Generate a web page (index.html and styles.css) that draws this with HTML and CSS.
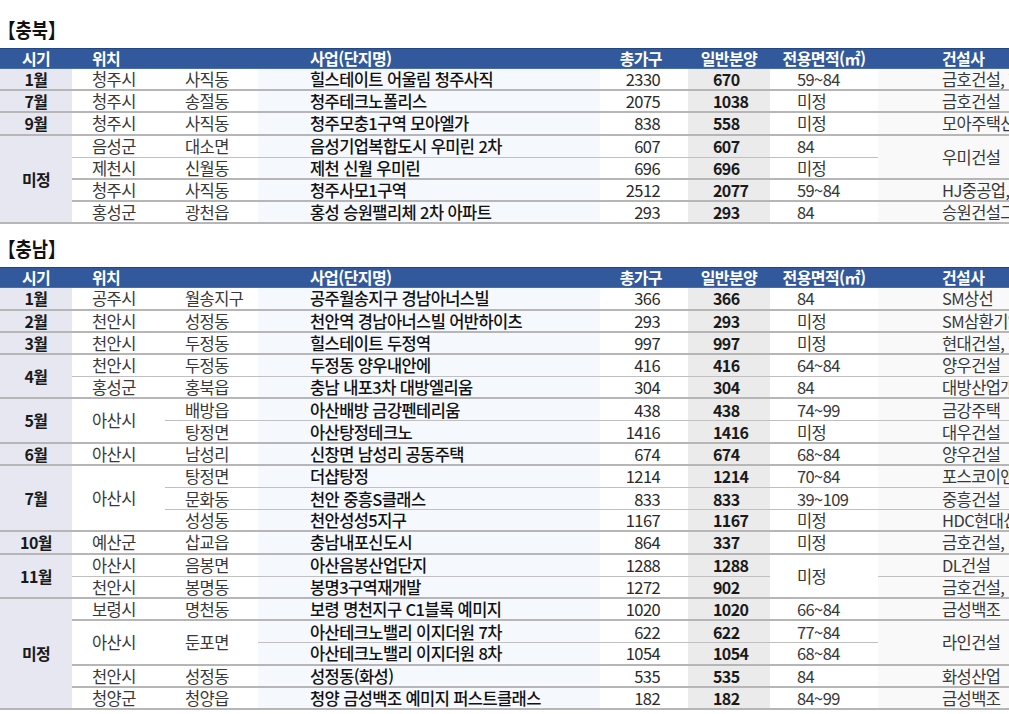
FILE: index.html
```html
<!DOCTYPE html>
<html lang="ko">
<head>
<meta charset="utf-8">
<title>충북 충남 분양 일정</title>
<link rel="stylesheet" href="styles.css">
</head>
<body>
<div class="title"><span>【충북】</span></div>
<table class="sched">
  <colgroup>
    <col class="c1"><col class="c2"><col class="c3"><col class="c4"><col class="c5"><col class="c6"><col class="c7"><col class="c8">
  </colgroup>
  <thead>
    <tr><th class="t">시기</th><th class="loc" colspan="2">위치</th><th class="pj">사업(단지명)</th><th class="tot">총가구</th><th class="hc">일반분양</th><th class="hc">전용면적(㎡)</th><th class="bd">건설사</th></tr>
  </thead>
  <tbody>
    <tr><td class="t">1월</td><td class="ci">청주시</td><td class="dg">사직동</td><td class="pj">힐스테이트 어울림 청주사직</td><td class="tot">2330</td><td class="gen">670</td><td class="ar">59~84</td><td class="bd">금호건설, 현대건설</td></tr>
    <tr><td class="t">7월</td><td class="ci">청주시</td><td class="dg">송절동</td><td class="pj">청주테크노폴리스</td><td class="tot">2075</td><td class="gen">1038</td><td class="ar">미정</td><td class="bd">금호건설</td></tr>
    <tr><td class="t">9월</td><td class="ci">청주시</td><td class="dg">사직동</td><td class="pj">청주모충1구역 모아엘가</td><td class="tot">838</td><td class="gen">558</td><td class="ar">미정</td><td class="bd">모아주택산업</td></tr>
    <tr><td class="t" rowspan="4">미정</td><td class="ci s">음성군</td><td class="dg s">대소면</td><td class="pj s">음성기업복합도시 우미린 2차</td><td class="tot s">607</td><td class="gen s">607</td><td class="ar s">84</td><td class="bd" rowspan="2">우미건설</td></tr>
    <tr><td class="ci">제천시</td><td class="dg">신월동</td><td class="pj">제천 신월 우미린</td><td class="tot">696</td><td class="gen">696</td><td class="ar">미정</td></tr>
    <tr><td class="ci">청주시</td><td class="dg">사직동</td><td class="pj">청주사모1구역</td><td class="tot">2512</td><td class="gen">2077</td><td class="ar">59~84</td><td class="bd">HJ중공업, 대우건설</td></tr>
    <tr><td class="ci">홍성군</td><td class="dg">광천읍</td><td class="pj">홍성 승원팰리체 2차 아파트</td><td class="tot">293</td><td class="gen">293</td><td class="ar">84</td><td class="bd">승원건설그룹</td></tr>
  </tbody>
</table>

<div class="title title2"><span>【충남】</span></div>
<table class="sched">
  <colgroup>
    <col class="c1"><col class="c2"><col class="c3"><col class="c4"><col class="c5"><col class="c6"><col class="c7"><col class="c8">
  </colgroup>
  <thead>
    <tr><th class="t">시기</th><th class="loc" colspan="2">위치</th><th class="pj">사업(단지명)</th><th class="tot">총가구</th><th class="hc">일반분양</th><th class="hc">전용면적(㎡)</th><th class="bd">건설사</th></tr>
  </thead>
  <tbody>
    <tr><td class="t">1월</td><td class="ci">공주시</td><td class="dg">월송지구</td><td class="pj">공주월송지구 경남아너스빌</td><td class="tot">366</td><td class="gen">366</td><td class="ar">84</td><td class="bd">SM상선</td></tr>
    <tr><td class="t">2월</td><td class="ci">천안시</td><td class="dg">성정동</td><td class="pj">천안역 경남아너스빌 어반하이츠</td><td class="tot">293</td><td class="gen">293</td><td class="ar">미정</td><td class="bd">SM삼환기업</td></tr>
    <tr><td class="t">3월</td><td class="ci">천안시</td><td class="dg">두정동</td><td class="pj">힐스테이트 두정역</td><td class="tot">997</td><td class="gen">997</td><td class="ar">미정</td><td class="bd">현대건설, 현대엔지니어링</td></tr>
    <tr><td class="t" rowspan="2">4월</td><td class="ci s">천안시</td><td class="dg s">두정동</td><td class="pj s">두정동 양우내안에</td><td class="tot s">416</td><td class="gen s">416</td><td class="ar s">64~84</td><td class="bd s">양우건설</td></tr>
    <tr><td class="ci">홍성군</td><td class="dg">홍북읍</td><td class="pj">충남 내포3차 대방엘리움</td><td class="tot">304</td><td class="gen">304</td><td class="ar">84</td><td class="bd">대방산업개발</td></tr>
    <tr><td class="t" rowspan="2">5월</td><td class="ci" rowspan="2">아산시</td><td class="dg s">배방읍</td><td class="pj s">아산배방 금강펜테리움</td><td class="tot s">438</td><td class="gen s">438</td><td class="ar s">74~99</td><td class="bd s">금강주택</td></tr>
    <tr><td class="dg">탕정면</td><td class="pj">아산탕정테크노</td><td class="tot">1416</td><td class="gen">1416</td><td class="ar">미정</td><td class="bd">대우건설</td></tr>
    <tr><td class="t">6월</td><td class="ci">아산시</td><td class="dg">남성리</td><td class="pj">신창면 남성리 공동주택</td><td class="tot">674</td><td class="gen">674</td><td class="ar">68~84</td><td class="bd">양우건설</td></tr>
    <tr><td class="t" rowspan="3">7월</td><td class="ci" rowspan="3">아산시</td><td class="dg s">탕정면</td><td class="pj s">더샵탕정</td><td class="tot s">1214</td><td class="gen s">1214</td><td class="ar s">70~84</td><td class="bd s">포스코이앤씨</td></tr>
    <tr><td class="dg s">문화동</td><td class="pj s">천안 중흥S클래스</td><td class="tot s">833</td><td class="gen s">833</td><td class="ar s">39~109</td><td class="bd s">중흥건설</td></tr>
    <tr><td class="dg">성성동</td><td class="pj">천안성성5지구</td><td class="tot">1167</td><td class="gen">1167</td><td class="ar">미정</td><td class="bd">HDC현대산업개발</td></tr>
    <tr><td class="t">10월</td><td class="ci">예산군</td><td class="dg">삽교읍</td><td class="pj">충남내포신도시</td><td class="tot">864</td><td class="gen">337</td><td class="ar">미정</td><td class="bd">금호건설, 대우건설</td></tr>
    <tr><td class="t" rowspan="2">11월</td><td class="ci s">아산시</td><td class="dg s">음봉면</td><td class="pj s">아산음봉산업단지</td><td class="tot s">1288</td><td class="gen s">1288</td><td class="ar" rowspan="2">미정</td><td class="bd s">DL건설</td></tr>
    <tr><td class="ci">천안시</td><td class="dg">봉명동</td><td class="pj">봉명3구역재개발</td><td class="tot">1272</td><td class="gen">902</td><td class="bd">금호건설, 대우건설</td></tr>
    <tr><td class="t" rowspan="5">미정</td><td class="ci">보령시</td><td class="dg">명천동</td><td class="pj">보령 명천지구 C1블록 예미지</td><td class="tot">1020</td><td class="gen">1020</td><td class="ar">66~84</td><td class="bd">금성백조</td></tr>
    <tr><td class="ci" rowspan="2">아산시</td><td class="dg" rowspan="2">둔포면</td><td class="pj s">아산테크노밸리 이지더원 7차</td><td class="tot s">622</td><td class="gen s">622</td><td class="ar s">77~84</td><td class="bd" rowspan="2">라인건설</td></tr>
    <tr><td class="pj">아산테크노밸리 이지더원 8차</td><td class="tot">1054</td><td class="gen">1054</td><td class="ar">68~84</td></tr>
    <tr><td class="ci">천안시</td><td class="dg">성정동</td><td class="pj">성정동(화성)</td><td class="tot">535</td><td class="gen">535</td><td class="ar">84</td><td class="bd">화성산업</td></tr>
    <tr><td class="ci">청양군</td><td class="dg">청양읍</td><td class="pj">청양 금성백조 예미지 퍼스트클래스</td><td class="tot">182</td><td class="gen">182</td><td class="ar">84~99</td><td class="bd">금성백조</td></tr>
  </tbody>
</table>
</body>
</html>
```

FILE: styles.css
```css
html, body {
  margin: 0;
  padding: 0;
  background: #ffffff;
  overflow: hidden;
}

body {
  width: 1009px;
  height: 714px;
  font-family: "Noto Sans CJK KR", "Noto Sans", sans-serif;
  color: #2b2b2b;
}

.title {
  height: 48px;
  box-sizing: border-box;
  padding-top: 19px;
  line-height: 22px;
  font-size: 20px;
  font-weight: 700;
  color: #111111;
  white-space: nowrap;
}

.title span {
  display: inline-block;
  transform: scaleX(0.88);
  transform-origin: left center;
  margin-left: -2px;
}

.title2 {
  height: 43px;
  padding-top: 14px;
}

.sched {
  width: 1009px;
  table-layout: fixed;
  border-collapse: separate;
  border-spacing: 0;
  font-size: 16.5px;
  letter-spacing: -0.6px;
}

.c1 { width: 72px; background: #e6e7f0; }
.c2 { width: 93px; }
.c3 { width: 93px; }
.c4 { width: 342px; background: #f5f8fc; }
.c5 { width: 88px; }
.c6 { width: 82px; background: #ebebeb; }
.c7 { width: 108px; }
.c8 { width: 131px; background: #f9f9f9; }

.sched thead tr {
  height: 21px;
}

.sched th {
  background: #32599b;
  color: #ffffff;
  font-weight: 700;
  font-size: 16px;
  padding: 0;
  line-height: 19px;
  text-align: left;
  white-space: nowrap;
  border-top: 1px solid #24467f;
  border-bottom: 1px solid #4a6ea8;
}

.sched tbody tr {
  height: 22.2px;
}

.sched td {
  padding: 0;
  line-height: 20px;
  border-bottom: 2px solid #b6b6b6;
  white-space: nowrap;
  vertical-align: middle;
  text-align: left;
}

.sched td.s {
  border-bottom: 1px solid #c0c0c0;
}

.sched .t {
  text-align: center;
  font-weight: 700;
  font-size: 16px;
  color: #1a1a1a;
}

.sched th.t {
  color: #ffffff;
}

.sched .loc { padding-left: 20px; }
.sched .ci { padding-left: 20px; color: #383838; }
.sched .dg { padding-left: 20px; color: #383838; }
.sched .pj { padding-left: 52px; color: #121212; font-weight: 500; }
.sched .tot { text-align: right; padding-right: 28px; color: #2a2a2a; }
.sched th.tot { padding-right: 26px; }
.sched .gen { padding-left: 25px; font-weight: 700; font-size: 16px; color: #1a1a1a; }
.sched .ar { padding-left: 27px; color: #383838; }
.sched .hc { text-align: center; }
.sched .bd { padding-left: 64px; color: #383838; overflow-x: clip; }
.sched th.pj, .sched th.tot, .sched th.bd, .sched th.loc { color: #ffffff; font-weight: 700; }
```
